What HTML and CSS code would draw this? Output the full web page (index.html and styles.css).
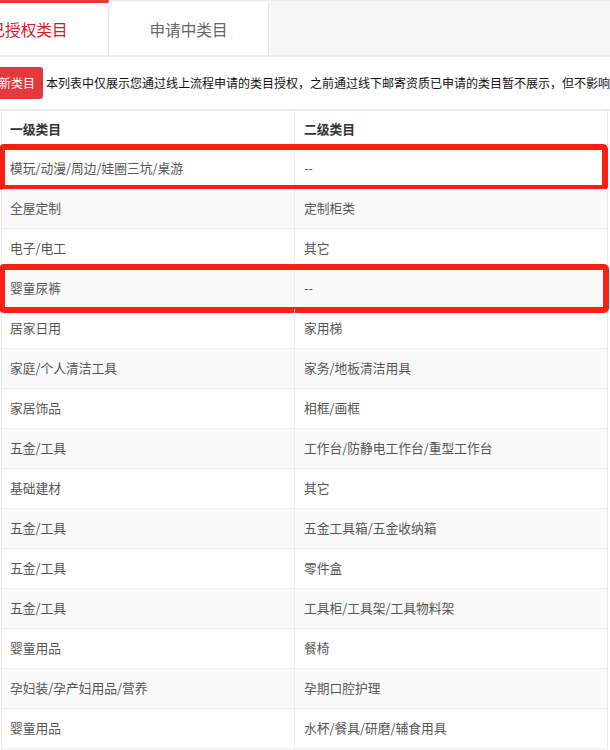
FILE: index.html
```html
<!DOCTYPE html>
<html lang="zh">
<head>
<meta charset="utf-8">
<link rel="stylesheet" href="styles.css">
</head>
<body>
<div class="page">
  <div class="tabs">
    <div class="tab active">已授权类目</div>
    <div class="tab">申请中类目</div>
  </div>
  <div class="notice">
    <span class="badge">最新类目</span>
    <span class="notice-text">本列表中仅展示您通过线上流程申请的类目授权，之前通过线下邮寄资质已申请的类目暂不展示，但不影响您的正常经营</span>
  </div>
  <div class="table">
    <div class="row head"><div class="cell">一级类目</div><div class="cell">二级类目</div></div>
    <div class="row marked mark-a"><div class="cell">模玩/动漫/周边/娃圈三坑/桌游</div><div class="cell">--</div></div>
    <div class="row alt"><div class="cell">全屋定制</div><div class="cell">定制柜类</div></div>
    <div class="row"><div class="cell">电子/电工</div><div class="cell">其它</div></div>
    <div class="row alt marked mark-b"><div class="cell">婴童尿裤</div><div class="cell">--</div></div>
    <div class="row"><div class="cell">居家日用</div><div class="cell">家用梯</div></div>
    <div class="row alt"><div class="cell">家庭/个人清洁工具</div><div class="cell">家务/地板清洁用具</div></div>
    <div class="row"><div class="cell">家居饰品</div><div class="cell">相框/画框</div></div>
    <div class="row alt"><div class="cell">五金/工具</div><div class="cell">工作台/防静电工作台/重型工作台</div></div>
    <div class="row"><div class="cell">基础建材</div><div class="cell">其它</div></div>
    <div class="row alt"><div class="cell">五金/工具</div><div class="cell">五金工具箱/五金收纳箱</div></div>
    <div class="row"><div class="cell">五金/工具</div><div class="cell">零件盒</div></div>
    <div class="row alt"><div class="cell">五金/工具</div><div class="cell">工具柜/工具架/工具物料架</div></div>
    <div class="row"><div class="cell">婴童用品</div><div class="cell">餐椅</div></div>
    <div class="row alt"><div class="cell">孕妇装/孕产妇用品/营养</div><div class="cell">孕期口腔护理</div></div>
    <div class="row"><div class="cell">婴童用品</div><div class="cell">水杯/餐具/研磨/辅食用具</div></div>
  </div>
</div>
</body>
</html>
```

FILE: styles.css
```css
html, body {
  margin: 0;
  padding: 0;
  background: #fff;
}
body {
  width: 610px;
  height: 750px;
  overflow: hidden;
  font-family: "Noto Sans CJK SC", "Noto Sans", sans-serif;
  color: #333;
}
.page {
  width: 610px;
}
.tabs {
  display: flex;
  height: 54px;
  margin-left: -51px;
  background: #f7f7f7;
  border-top: 1px solid #ececec;
  border-bottom: 2px solid #ececec;
}
.tab {
  width: 159px;
  margin-top: 1px;
  padding-top: 3px;
  display: flex;
  align-items: center;
  justify-content: center;
  background: #fff;
  border-right: 1px solid #e6e6e6;
  font-size: 15.6px;
  color: #666;
  line-height: 1;
}
.tab.active {
  margin-top: -1px;
  padding-top: 1px;
  border-top: 3px solid #e4393c;
  color: #d9162b;
}
.notice {
  display: flex;
  align-items: center;
  height: 52px;
  border-bottom: 2px solid #ececec;
  white-space: nowrap;
  overflow: hidden;
}
.badge {
  flex: none;
  display: flex;
  align-items: center;
  height: 32px;
  margin-left: -23px;
  padding: 0 8px 0 10px;
  background: #e4393c;
  color: #fff;
  border-radius: 3px;
  font-size: 12px;
  line-height: 1;
}
.notice-text {
  margin-left: 3px;
  font-size: 12px;
  color: #111;
  line-height: 1;
}
.table {
  margin-left: 1px;
  width: 607px;
  border-left: 1px solid #e8e8e8;
  border-right: 1px solid #e8e8e8;
  box-sizing: border-box;
}
.row {
  position: relative;
  display: grid;
  grid-template-columns: 292px 1fr;
  height: 40px;
  box-sizing: border-box;
  border-bottom: 1px solid #ececec;
  font-size: 12.75px;
  color: #555;
}
.row.head {
  height: 38px;
  font-weight: bold;
  color: #333;
}
.row.alt {
  background: #fafafa;
}
.cell {
  display: flex;
  align-items: center;
  padding-left: 8px;
  line-height: 1;
  white-space: nowrap;
}
.cell + .cell {
  border-left: 1px solid #ececec;
  padding-left: 9px;
}
.marked::after {
  content: "";
  position: absolute;
  left: -3px;
  right: -1px;
  border: 6px solid #ff1e14;
  border-radius: 5px;
  pointer-events: none;
}
.mark-a::after {
  top: -5px;
  bottom: -3px;
}
.mark-b::after {
  top: -5px;
  bottom: -5px;
  right: -2px;
}
```
